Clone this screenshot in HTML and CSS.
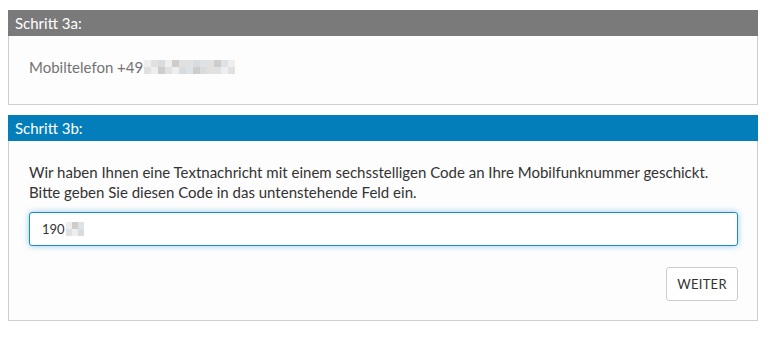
FILE: index.html
```html
<!DOCTYPE html>
<html lang="de">
<head>
    <meta charset="UTF-8">
    <title>Schritt 3</title>
    <link rel="stylesheet" href="styles.css">
</head>
<body>
    <div class="panel">
        <div class="panel-head grey">Schritt 3a:</div>
        <div class="panel-body short">
            <div class="phone">Mobiltelefon +49<span class="blur wide">
                <i class="c1"></i><i class="c2"></i><i class="c3"></i><i class="c1"></i><i class="c4"></i><i class="c2"></i><i class="c5"></i><i class="c3"></i><i class="c5"></i><i class="c2"></i><i class="c4"></i><i class="c5"></i><i class="c1"></i>
                <i class="c2"></i><i class="c1"></i><i class="c4"></i><i class="c2"></i><i class="c1"></i><i class="c3"></i><i class="c5"></i><i class="c4"></i><i class="c3"></i><i class="c2"></i><i class="c5"></i><i class="c1"></i><i class="c2"></i>
            </span></div>
        </div>
    </div>

    <div class="panel">
        <div class="panel-head blue">Schritt 3b:</div>
        <div class="panel-body">
            <p class="info">Wir haben Ihnen eine Textnachricht mit einem sechsstelligen Code an Ihre Mobilfunknummer geschickt.<br>Bitte geben Sie diesen Code in das untenstehende Feld ein.</p>
            <div class="code-field">190<span class="blur small">
                <i class="c1"></i><i class="c4"></i><i class="c5"></i>
                <i class="c2"></i><i class="c1"></i><i class="c3"></i>
            </span></div>
            <div class="actions">
                <button class="btn">Weiter</button>
            </div>
        </div>
    </div>
</body>
</html>
```

FILE: styles.css
```css
* {
    margin: 0;
    padding: 0;
    box-sizing: border-box;
}

body {
    font-family: Lato, "Open Sans", sans-serif;
    background: #fff;
    padding: 10px 15px 0 8px;
    color: #333;
}

.panel {
    width: 750px;
    margin-bottom: 10px;
}

.panel-head {
    height: 26px;
    line-height: 26px;
    padding-left: 7px;
    color: #fff;
    font-size: 15px;
}

.grey {
    background: #7a7a7a;
}

.blue {
    background: #037eba;
}

.panel-body {
    background: #fdfdfd;
    border: 1px solid #c9d0d4;
    border-top: none;
    padding: 20px 19px 19px 20px;
}

.panel-body.short {
    padding-bottom: 26px;
}

.phone {
    color: #737373;
    font-size: 15px;
    height: 22px;
    line-height: 22px;
    display: flex;
    align-items: center;
}

.blur {
    display: grid;
    margin-left: 1px;
}

.blur.wide {
    grid-template-columns: repeat(13, 7px);
    grid-template-rows: 7px 7px;
}

.blur.small {
    grid-template-columns: repeat(3, 6px);
    grid-template-rows: 7px 7px;
}

.blur i {
    display: block;
}

.c1 { background: #eceef0; }
.c2 { background: #e3e1e0; }
.c3 { background: #d9dcdf; }
.c4 { background: #cfcdcc; }
.c5 { background: #dfe2e5; }

.info {
    font-size: 15px;
    line-height: 20px;
    padding-top: 1px;
    margin-bottom: 10px;
}

.code-field {
    height: 34px;
    border: 1px solid #1a8bd1;
    border-radius: 3px;
    background: #fff;
    box-shadow: 0 0 6px rgba(26, 139, 209, 0.45);
    display: flex;
    align-items: center;
    padding-left: 12px;
    font-size: 13px;
    color: #333;
}

.actions {
    display: flex;
    justify-content: flex-end;
    margin-top: 21px;
}

.btn {
    width: 72px;
    height: 34px;
    border: 1px solid #cdcdcd;
    border-radius: 3px;
    background: #fff;
    font-family: Lato, "Open Sans", sans-serif;
    font-size: 13px;
    color: #333;
    text-transform: uppercase;
    letter-spacing: 0.3px;
}
```
